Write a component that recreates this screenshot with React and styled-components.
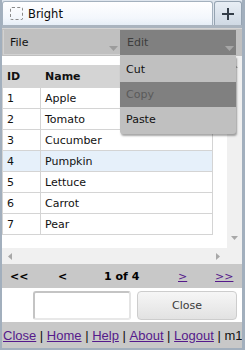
import React from 'react'
import styled, {createGlobalStyle} from 'styled-components'

const Global = createGlobalStyle`
    html, body { margin: 0; padding: 0; background: #fff; }
    * { box-sizing: border-box; }
`;

const rows = [
    {id: 1, name: 'Apple'},
    {id: 2, name: 'Tomato'},
    {id: 3, name: 'Cucumber'},
    {id: 4, name: 'Pumpkin', selected: true},
    {id: 5, name: 'Lettuce'},
    {id: 6, name: 'Carrot'},
    {id: 7, name: 'Pear'},
]

const Down = ({color}) => (
    <svg width="9" height="5" viewBox="0 0 9 5"><path d="M0 0h9L4.5 5z" fill={color}/></svg>
)

const Arrow = ({dir}) => {
    const d = {
        up: 'M0 4h7L3.5 0z',
        down: 'M0 0h7L3.5 4z',
        left: 'M4 0v7L0 3.5z',
        right: 'M0 0v7L4 3.5z',
    }[dir]
    const vertical = dir === 'up' || dir === 'down'
    return (
        <svg width={vertical ? 7 : 4} height={vertical ? 4 : 7} viewBox={vertical ? '0 0 7 4' : '0 0 4 7'}>
            <path d={d} fill="#a8a8a8"/>
        </svg>
    )
}

const App = () => {
    return (
        <Frame>
            <Global/>
            <TopBar>
                <Tab>
                    <Check/>
                    Bright
                </Tab>
                <PlusButton>
                    <svg width="12" height="12" viewBox="0 0 12 12">
                        <path d="M5 0h2v5h5v2H7v5H5V7H0V5h5z" fill="#333d48"/>
                    </svg>
                </PlusButton>
            </TopBar>

            <MenuBar>
                <MenuItem>
                    File
                    <Caret><Down color="#9c9c9c"/></Caret>
                </MenuItem>
                <MenuItem open>
                    Edit
                    <Caret><Down color="#a6a6a6"/></Caret>
                </MenuItem>
                <Dropdown>
                    <DropItem>Cut</DropItem>
                    <DropItem active>Copy</DropItem>
                    <DropItem>Paste</DropItem>
                </Dropdown>
            </MenuBar>

            <ScrollArea>
                <Viewport>
                    <Table>
                        <thead>
                            <tr>
                                <Th width={38}>ID</Th>
                                <Th>Name</Th>
                            </tr>
                        </thead>
                        <tbody>
                            {rows.map(r => (
                                <Tr key={r.id} selected={r.selected}>
                                    <Td>{r.id}</Td>
                                    <Td>{r.name}</Td>
                                </Tr>
                            ))}
                        </tbody>
                    </Table>
                </Viewport>
                <VScroll>
                    <Arrow dir="up"/>
                    <Arrow dir="down"/>
                </VScroll>
                <HScroll>
                    <Arrow dir="left"/>
                    <Arrow dir="right"/>
                </HScroll>
                <Corner/>
            </ScrollArea>

            <Pager>
                <PageCell w={48}>&lt;&lt;</PageCell>
                <PageCell w={46}>&lt;</PageCell>
                <PageCell w={74}>1 of 4</PageCell>
                <PageCell w={37}><PageLink href="#">&gt;</PageLink></PageCell>
                <PageCell><PageLink href="#">&gt;&gt;</PageLink></PageCell>
            </Pager>

            <ActionRow>
                <TextBox/>
                <CloseButton>Close</CloseButton>
            </ActionRow>

            <Footer>
                <FootLink href="#">Close</FootLink> | <FootLink href="#">Home</FootLink> | <FootLink href="#">Help</FootLink> | <FootLink href="#">About</FootLink> | <FootLink href="#">Logout</FootLink> | m1
            </Footer>
        </Frame>
    )
}

const Frame = styled.div`
    width: 245px;
    height: 350px;
    border: 2px solid #a2afbd;
    border-top: none;
    border-right-width: 3px;
    background: #fff;
    display: flex;
    flex-direction: column;
    font-family: "DejaVu Sans", Tahoma, sans-serif;
    font-size: 11px;
    color: #111;
    overflow: hidden;
`;

const TopBar = styled.div`
    display: flex;
    gap: 1px;
    height: 28px;
    padding-top: 1px;
    background: #dfe6ee;
    border-bottom: 3px solid #aab4bf;
`;

const Tab = styled.div`
    flex: 1;
    display: flex;
    align-items: center;
    gap: 5px;
    padding-left: 7px;
    font-size: 11.5px;
    color: #0b0b0b;
    background: linear-gradient(#ffffff, #f3f7fc 70%, #e6eef7);
    border: 1px solid #a4b1be;
    border-bottom: none;
    border-radius: 3px 3px 0 0;
`;

const Check = styled.span`
    width: 13px;
    height: 13px;
    border: 1px dashed #8a8a8a;
    border-radius: 2px;
`;

const PlusButton = styled.div`
    width: 28px;
    display: flex;
    align-items: center;
    justify-content: center;
    background: linear-gradient(#e8eef5, #cfd9e4);
    border: 1px solid #95a3b1;
    border-bottom: none;
    border-radius: 3px 3px 0 0;
`;

const MenuBar = styled.div`
    position: relative;
    display: grid;
    grid-template-columns: 117px 116px;
    gap: 0;
    height: 28px;
    padding: 1px 5px 1px 1px;
    background: #c0c0c0;
    border-top: 1px solid #d4d4d4;
`;

const MenuItem = styled.div`
    position: relative;
    display: flex;
    align-items: center;
    padding-left: 6px;
    background: ${p => p.open ? '#808080' : '#c0c0c0'};
    color: ${p => p.open ? '#3d3d3d' : '#111'};
    border-left: 1px solid ${p => p.open ? '#808080' : '#d2d2d2'};
    border-bottom: 1px solid ${p => p.open ? '#808080' : '#d2d2d2'};
`;

const Caret = styled.span`
    position: absolute;
    right: 2px;
    bottom: 3px;
    display: flex;
`;

const Dropdown = styled.div`
    position: absolute;
    left: 118px;
    top: 27px;
    width: 116px;
    padding: 1px 0 2px;
    background: #c0c0c0;
    border-radius: 0 0 3px 3px;
    box-shadow: 1px 2px 2px rgba(0, 0, 0, 0.35);
    z-index: 2;
`;

const DropItem = styled.div`
    height: 25px;
    display: flex;
    align-items: center;
    padding-left: 6px;
    background: ${p => p.active ? '#808080' : 'transparent'};
    color: ${p => p.active ? '#5a5a5a' : '#111'};
`;

const ScrollArea = styled.div`
    flex: 1;
    display: grid;
    grid-template-columns: 1fr 15px;
    grid-template-rows: 1fr 16px;
    background: #fff;
`;

const Viewport = styled.div`
    padding-top: 9px;
    overflow: hidden;
`;

const Table = styled.table`
    border-collapse: collapse;
    width: 211px;
`;

const Th = styled.th`
    width: ${p => p.width ? p.width + 'px' : 'auto'};
    height: 22px;
    padding: 0 4px;
    text-align: left;
    font-weight: bold;
    background: #d4d4d4;
    border: 1px solid #d4d4d4;
    border-right-color: #d4d4d4;
`;

const Tr = styled.tr`
    background: ${p => p.selected ? '#e6f0fa' : '#fff'};
`;

const Td = styled.td`
    height: 21px;
    padding: 0 4px;
    border: 1px solid #d4d4d4;
`;

const VScroll = styled.div`
    display: flex;
    flex-direction: column;
    align-items: center;
    justify-content: space-between;
    padding: 8px 0 8px;
    background: #f0f0f0;
`;

const HScroll = styled.div`
    display: flex;
    align-items: center;
    justify-content: space-between;
    padding: 0 7px 0 6px;
    background: #f0f0f0;
`;

const Corner = styled.div`
    background: #f0f0f0;
`;

const Pager = styled.div`
    display: flex;
    align-items: center;
    height: 24px;
    padding-left: 8px;
    background: #c8c8c8;
    font-weight: bold;
    color: #000;
`;

const PageCell = styled.div`
    width: ${p => p.w ? p.w + 'px' : 'auto'};
    white-space: nowrap;
`;

const PageLink = styled.a`
    color: #551a8b;
    font-weight: normal;
`;

const ActionRow = styled.div`
    display: flex;
    justify-content: flex-end;
    gap: 6px;
    height: 34px;
    padding: 3px 5px 2px;
    background: #fff;
`;

const TextBox = styled.input`
    width: 98px;
    border: 2px solid #c4c4c4;
    border-right-color: #e4e4e4;
    border-bottom-color: #e8e8e8;
    border-radius: 3px;
    outline: none;
`;

const CloseButton = styled.button`
    width: 100px;
    font-family: "DejaVu Sans", Tahoma, sans-serif;
    font-size: 11px;
    color: #3a3a3a;
    background: linear-gradient(#f6f6f6, #e2e2e2);
    border: 1px solid #cdcdcd;
    border-radius: 4px;
`;

const Footer = styled.div`
    height: 26px;
    display: flex;
    align-items: center;
    gap: 0;
    padding-left: 1px;
    white-space: pre;
    background: #c8c8c8;
    font-family: "Liberation Sans", Arial, sans-serif;
    font-size: 13px;
    color: #111;
`;

const FootLink = styled.a`
    color: #551a8b;
`;

export default App
